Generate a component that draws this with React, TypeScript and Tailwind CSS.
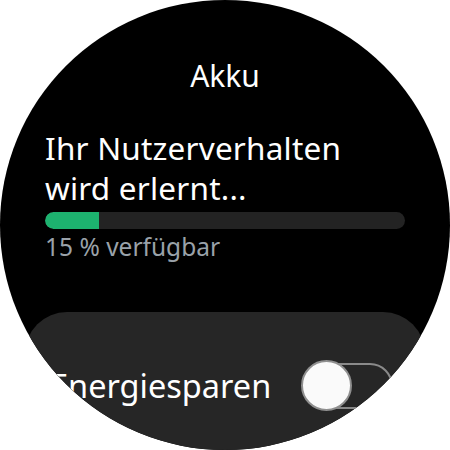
import React from 'react';

const font = { fontFamily: '"Noto Sans", "Open Sans", sans-serif' };

const Toggle: React.FC = () => {
  return (
    <div className="relative w-[92px] h-[51px] shrink-0">
      <div className="absolute left-[3px] right-0 top-[3px] h-[46px] rounded-full border-2 border-[#8a8a8a]" />
      <div className="absolute left-0 top-0 w-[51px] h-[51px] rounded-full bg-[#fafafa] border-2 border-[#8f8f8f]" />
    </div>
  );
};

export default function App() {
  return (
    <div className="w-[450px] h-[450px] bg-white">
      <div className="w-[450px] h-[450px] rounded-full overflow-hidden bg-black flex flex-col" style={font}>
        {/* Header */}
        <div className="pt-[56px] text-center text-white text-[30px] leading-[40px]">Akku</div>

        {/* Status */}
        <div className="pl-[45px] pr-[45px] mt-[32px]">
          <p className="text-white text-[31.5px] leading-[40px] tracking-[0.2px]">
            Ihr Nutzerverhalten
            <br />
            wird erlernt...
          </p>
          <div className="mt-[4px] h-[17px] rounded-full bg-[#232323] overflow-hidden">
            <div className="h-full w-[15%] bg-[#1db26f] rounded-l-full" />
          </div>
          <p className="mt-[3px] text-[#9aa2a9] text-[24.5px] leading-[30px]">15 % verfügbar</p>
        </div>

        {/* Card */}
        <div className="mt-[50px] mx-[25px] flex-1 rounded-t-[42px] bg-[#262626]">
          <div className="flex items-center pl-[25px] pt-[48px] gap-[30px]">
            <span className="text-white text-[32.5px] leading-[44px]">Energiesparen</span>
            <Toggle />
          </div>
        </div>
      </div>
    </div>
  );
}
